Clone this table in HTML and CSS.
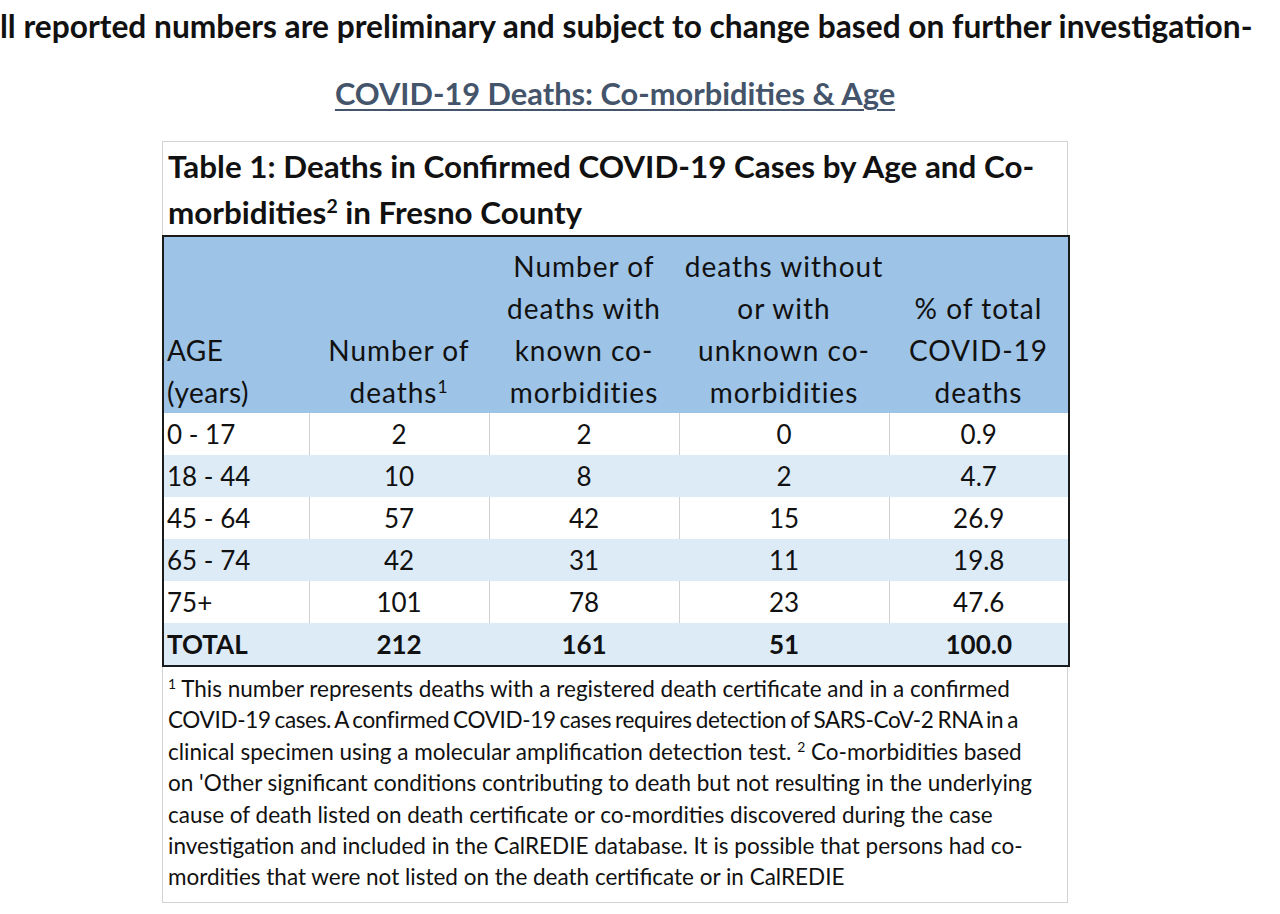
FILE: index.html
```html
<!DOCTYPE html>
<html lang="en">
<head>
<meta charset="utf-8">
<title>COVID-19 Deaths: Co-morbidities &amp; Age</title>
<link rel="stylesheet" href="styles.css">
</head>
<body>
<p class="notice">ll reported numbers are preliminary and subject to change based on further investigation-</p>
<h2 class="section-title"><span>COVID-19 Deaths: Co-morbidities &amp; Age</span></h2>
<div class="table-box">
  <div class="caption">Table 1: Deaths in Confirmed COVID-19 Cases by Age and Co-<br>morbidities<sup>2</sup> in Fresno County</div>
  <table class="data">
    <colgroup>
      <col class="c1"><col class="c2"><col class="c3"><col class="c4"><col class="c5">
    </colgroup>
    <thead>
      <tr>
        <th class="age">AGE<br>(years)</th>
        <th>Number of<br>deaths<sup>1</sup></th>
        <th>Number of<br>deaths with<br>known co-<br>morbidities</th>
        <th>deaths without<br>or with<br>unknown co-<br>morbidities</th>
        <th>% of total<br>COVID-19<br>deaths</th>
      </tr>
    </thead>
    <tbody>
      <tr><td class="age">0 - 17</td><td>2</td><td>2</td><td>0</td><td>0.9</td></tr>
      <tr class="alt"><td class="age">18 - 44</td><td>10</td><td>8</td><td>2</td><td>4.7</td></tr>
      <tr><td class="age">45 - 64</td><td>57</td><td>42</td><td>15</td><td>26.9</td></tr>
      <tr class="alt"><td class="age">65 - 74</td><td>42</td><td>31</td><td>11</td><td>19.8</td></tr>
      <tr><td class="age">75+</td><td>101</td><td>78</td><td>23</td><td>47.6</td></tr>
      <tr class="alt total"><td class="age">TOTAL</td><td>212</td><td>161</td><td>51</td><td>100.0</td></tr>
    </tbody>
  </table>
  <div class="footnote"><sup>1</sup> This number represents deaths with a registered death certificate and in a confirmed<br><span class="tight">COVID-19 cases. A confirmed COVID-19 cases requires detection of SARS-CoV-2 RNA in a</span><br>clinical specimen using a molecular amplification detection test. <sup>2</sup> Co-morbidities based<br>on 'Other significant conditions contributing to death but not resulting in the underlying<br>cause of death listed on death certificate or co-mordities discovered during the case<br>investigation and included in the CalREDIE database. It is possible that persons had co-<br>mordities that were not listed on the death certificate or in CalREDIE</div>
</div>
</body>
</html>
```
FILE: styles.css
```css
body {
  margin: 0;
  background: #ffffff;
  color: #111111;
  font-family: Lato, "Open Sans", sans-serif;
}

.notice {
  margin: 0;
  padding-top: 6px;
  font-weight: 700;
  font-size: 31.7px;
  line-height: 40px;
  white-space: nowrap;
}

.section-title {
  margin: 29px 0 0 162px;
  width: 906px;
  text-align: center;
  font-size: 30.8px;
  line-height: 38px;
  font-weight: 700;
  color: #44546a;
}

.section-title span {
  text-decoration: underline;
  text-decoration-thickness: 2px;
  text-underline-offset: 4px;
}

.table-box {
  margin: 28px 0 0 162px;
  width: 906px;
}

.caption {
  border: 1px solid #d2d2d2;
  border-bottom: none;
  padding: 1px 5px 0;
  font-weight: 700;
  font-size: 31.4px;
  line-height: 46px;
  white-space: nowrap;
}

sup {
  font-size: 0.62em;
  line-height: 0;
  vertical-align: 0.55em;
}

.data {
  width: 100%;
  border-collapse: collapse;
  table-layout: fixed;
  border: 2px solid #1b1b1b;
}

.c1 { width: 146px; }
.c2 { width: 180px; }
.c3 { width: 190px; }
.c4 { width: 210px; }
.c5 { width: 180px; }

.data th {
  background: #9dc3e6;
  font-weight: 400;
  font-size: 28px;
  letter-spacing: 1px;
  line-height: 42px;
  vertical-align: bottom;
  text-align: center;
  padding: 8px 0 0;
  white-space: nowrap;
}

.data td {
  height: 42px;
  padding: 0 2px;
  font-size: 26px;
  text-align: center;
  border-left: 1px solid #d0d0d0;
}

.data tr.alt td {
  background: #ddebf7;
  border-left-color: #ddebf7;
}

.data .age {
  text-align: left;
  padding-left: 3px;
  border-left: none;
}

.data th.age {
  padding-left: 3px;
  letter-spacing: 0.4px;
}

.data tr.total td {
  font-weight: 700;
}

.footnote {
  border: 1px solid #d2d2d2;
  border-top: none;
  padding: 6px 5px 9px;
  font-size: 22.5px;
  line-height: 31.4px;
  white-space: nowrap;
}

.footnote .tight {
  letter-spacing: -0.35px;
  word-spacing: -1.5px;
}
```
